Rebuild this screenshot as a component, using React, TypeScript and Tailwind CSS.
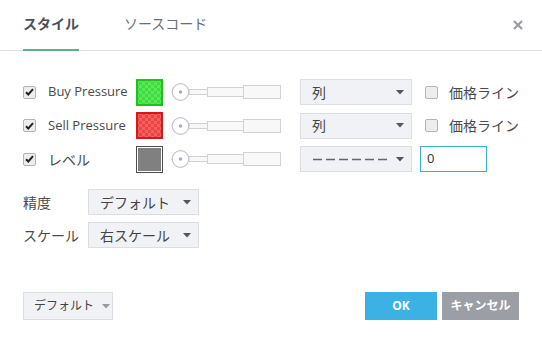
import { ReactNode } from "react";

function Caret({ color = "#555" }: { color?: string }) {
  return (
    <svg width="8" height="5" viewBox="0 0 8 5" className="shrink-0">
      <path d="M0 0h8L4 4.5z" fill={color} />
    </svg>
  );
}

function CheckBox({ checked }: { checked?: boolean }) {
  return (
    <div className="w-[13px] h-[13px] rounded-[2px] border border-[#b4b4b4] bg-[#ededed] flex items-center justify-center shrink-0">
      {checked && (
        <svg width="9" height="8" viewBox="0 0 9 8">
          <path d="M1 4.2l2.3 2.3L8 1.2" stroke="#222" strokeWidth="2" fill="none" />
        </svg>
      )}
    </div>
  );
}

function Swatch({ border, light, dark, id }: { border: string; light: string; dark: string; id: string }) {
  return (
    <div className="w-[27px] h-[27px] shrink-0">
      <svg width="27" height="27" viewBox="0 0 27 27">
        <defs>
          <pattern id={id} width="6" height="6" patternUnits="userSpaceOnUse">
            <rect width="6" height="6" fill={light} />
            <rect width="3" height="3" fill={dark} />
            <rect x="3" y="3" width="3" height="3" fill={dark} />
          </pattern>
        </defs>
        <rect x="1" y="1" width="25" height="25" fill={`url(#${id})`} stroke={border} strokeWidth="2" />
      </svg>
    </div>
  );
}

function GraySwatch() {
  return (
    <div className="w-[27px] h-[27px] border border-[#4d4d4d] p-[1px] bg-white shrink-0">
      <div className="w-full h-full bg-[#808080]" />
    </div>
  );
}

function Slider() {
  return (
    <svg width="112" height="22" viewBox="0 0 112 22" className="shrink-0">
      <rect x="18" y="8.5" width="19" height="5" fill="#f8f8f8" stroke="#d2d2d2" />
      <rect x="36.5" y="6.5" width="36" height="9" fill="#f8f8f8" stroke="#d2d2d2" />
      <rect x="72.5" y="4.5" width="37" height="13" fill="#f8f8f8" stroke="#d2d2d2" />
      <circle cx="9.5" cy="11" r="8.3" fill="#fff" stroke="#c3c6cf" strokeWidth="1.2" />
      <circle cx="9.5" cy="11" r="1.8" fill="#a9adb6" />
    </svg>
  );
}

function Select({ children, width }: { children: ReactNode; width: string }) {
  return (
    <div className={`${width} h-[26px] bg-[#f1f2f6] border border-[#dcdde3] flex items-center justify-between pl-[11px] pr-[7px] text-[14px] text-[#444]`}>
      <div className="flex items-center">{children}</div>
      <Caret />
    </div>
  );
}

function PlotRow({ label, swatch, last, jp }: { label: string; swatch: ReactNode; last?: ReactNode; jp?: boolean }) {
  return (
    <div className="flex items-center h-[26px]">
      <CheckBox checked />
      <span className={`ml-[12px] w-[88px] ${jp ? "text-[14px]" : "text-[13px]"} text-[#4a4a4a]`}>{label}</span>
      {swatch}
      <div className="ml-[8px]">
        <Slider />
      </div>
      <div className="ml-[17px]">{last}</div>
    </div>
  );
}

function PriceLine() {
  return (
    <>
      <div className="ml-[13px]"><CheckBox /></div>
      <span className="ml-[11px] text-[14px] text-[#4a4a4a]">価格ライン</span>
    </>
  );
}

export default function App() {
  const font = "font-['Open_Sans','Noto_Sans_CJK_JP',sans-serif]";
  return (
    <div className={`w-[542px] h-[344px] bg-white relative ${font}`}>
      {/* Tabs */}
      <div className="h-[51px] border-b border-[#e1e1e1] flex items-end pl-[23px]">
        <div className="relative h-full flex items-center">
          <span className="text-[14px] font-bold text-[#4b505a] -mt-[4px]">スタイル</span>
          <div className="absolute left-0 right-0 bottom-[-1px] h-[2px] bg-[#52b884]" />
        </div>
        <div className="h-full flex items-center ml-[45px]">
          <span className="text-[14px] text-[#6a6e77] -mt-[4px]">ソースコード</span>
        </div>
        <div className="ml-auto mr-[19px] h-full flex items-center -mt-[7px]">
          <svg width="10" height="10" viewBox="0 0 10 10">
            <path d="M1 1l8 8M9 1l-8 8" stroke="#9a9ca2" strokeWidth="2.2" />
          </svg>
        </div>
      </div>

      {/* Plots */}
      <div className="pl-[23px] pt-[28px] flex flex-col gap-[7.5px]">
        <PlotRow
          label="Buy Pressure"
          swatch={<Swatch id="g" border="#20c020" light="#5ae85a" dark="#3edc3e" />}
          last={
            <div className="flex items-center">
              <Select width="w-[112px]">列</Select>
              <PriceLine />
            </div>
          }
        />
        <PlotRow
          label="Sell Pressure"
          swatch={<Swatch id="r" border="#d11a1a" light="#f26060" dark="#ec4444" />}
          last={
            <div className="flex items-center">
              <Select width="w-[112px]">列</Select>
              <PriceLine />
            </div>
          }
        />
        <PlotRow
          label="レベル"
          jp
          swatch={<GraySwatch />}
          last={
            <div className="flex items-center">
              <Select width="w-[112px]">
                <svg width="78" height="3" viewBox="0 0 78 3">
                  <line x1="1" y1="1.5" x2="78" y2="1.5" stroke="#666" strokeWidth="1.6" strokeDasharray="9 4" />
                </svg>
              </Select>
              <div className="ml-[8px] w-[67px] h-[26px] border border-[#3aaee0] flex items-center pl-[6px] text-[13px] text-[#333]">
                0
              </div>
            </div>
          }
        />
      </div>

      {/* Precision / scale */}
      <div className="pl-[23px] mt-[17px] flex flex-col gap-[7px]">
        <div className="flex items-center h-[26px]">
          <span className="w-[65px] text-[14px] text-[#4a4a4a]">精度</span>
          <Select width="w-[111px]">デフォルト</Select>
        </div>
        <div className="flex items-center h-[26px]">
          <span className="w-[65px] text-[14px] text-[#4a4a4a]">スケール</span>
          <Select width="w-[111px]">右スケール</Select>
        </div>
      </div>

      {/* Footer */}
      <div className="absolute left-[23px] right-[23px] top-[292px] flex items-center">
        <div className="w-[90px] h-[28px] bg-[#f1f2f6] border border-[#dcdde3] flex items-center pl-[10px] gap-[8px] text-[12px] text-[#444]">
          デフォルト
          <Caret color="#999" />
        </div>
        <div className="ml-auto w-[72px] h-[28px] bg-[#3bb2e3] text-white text-[12px] font-bold flex items-center justify-center">
          OK
        </div>
        <div className="ml-[5px] w-[77px] h-[28px] bg-[#9c9ea6] text-white text-[12px] font-bold flex items-center justify-center">
          キャンセル
        </div>
      </div>
    </div>
  );
}
